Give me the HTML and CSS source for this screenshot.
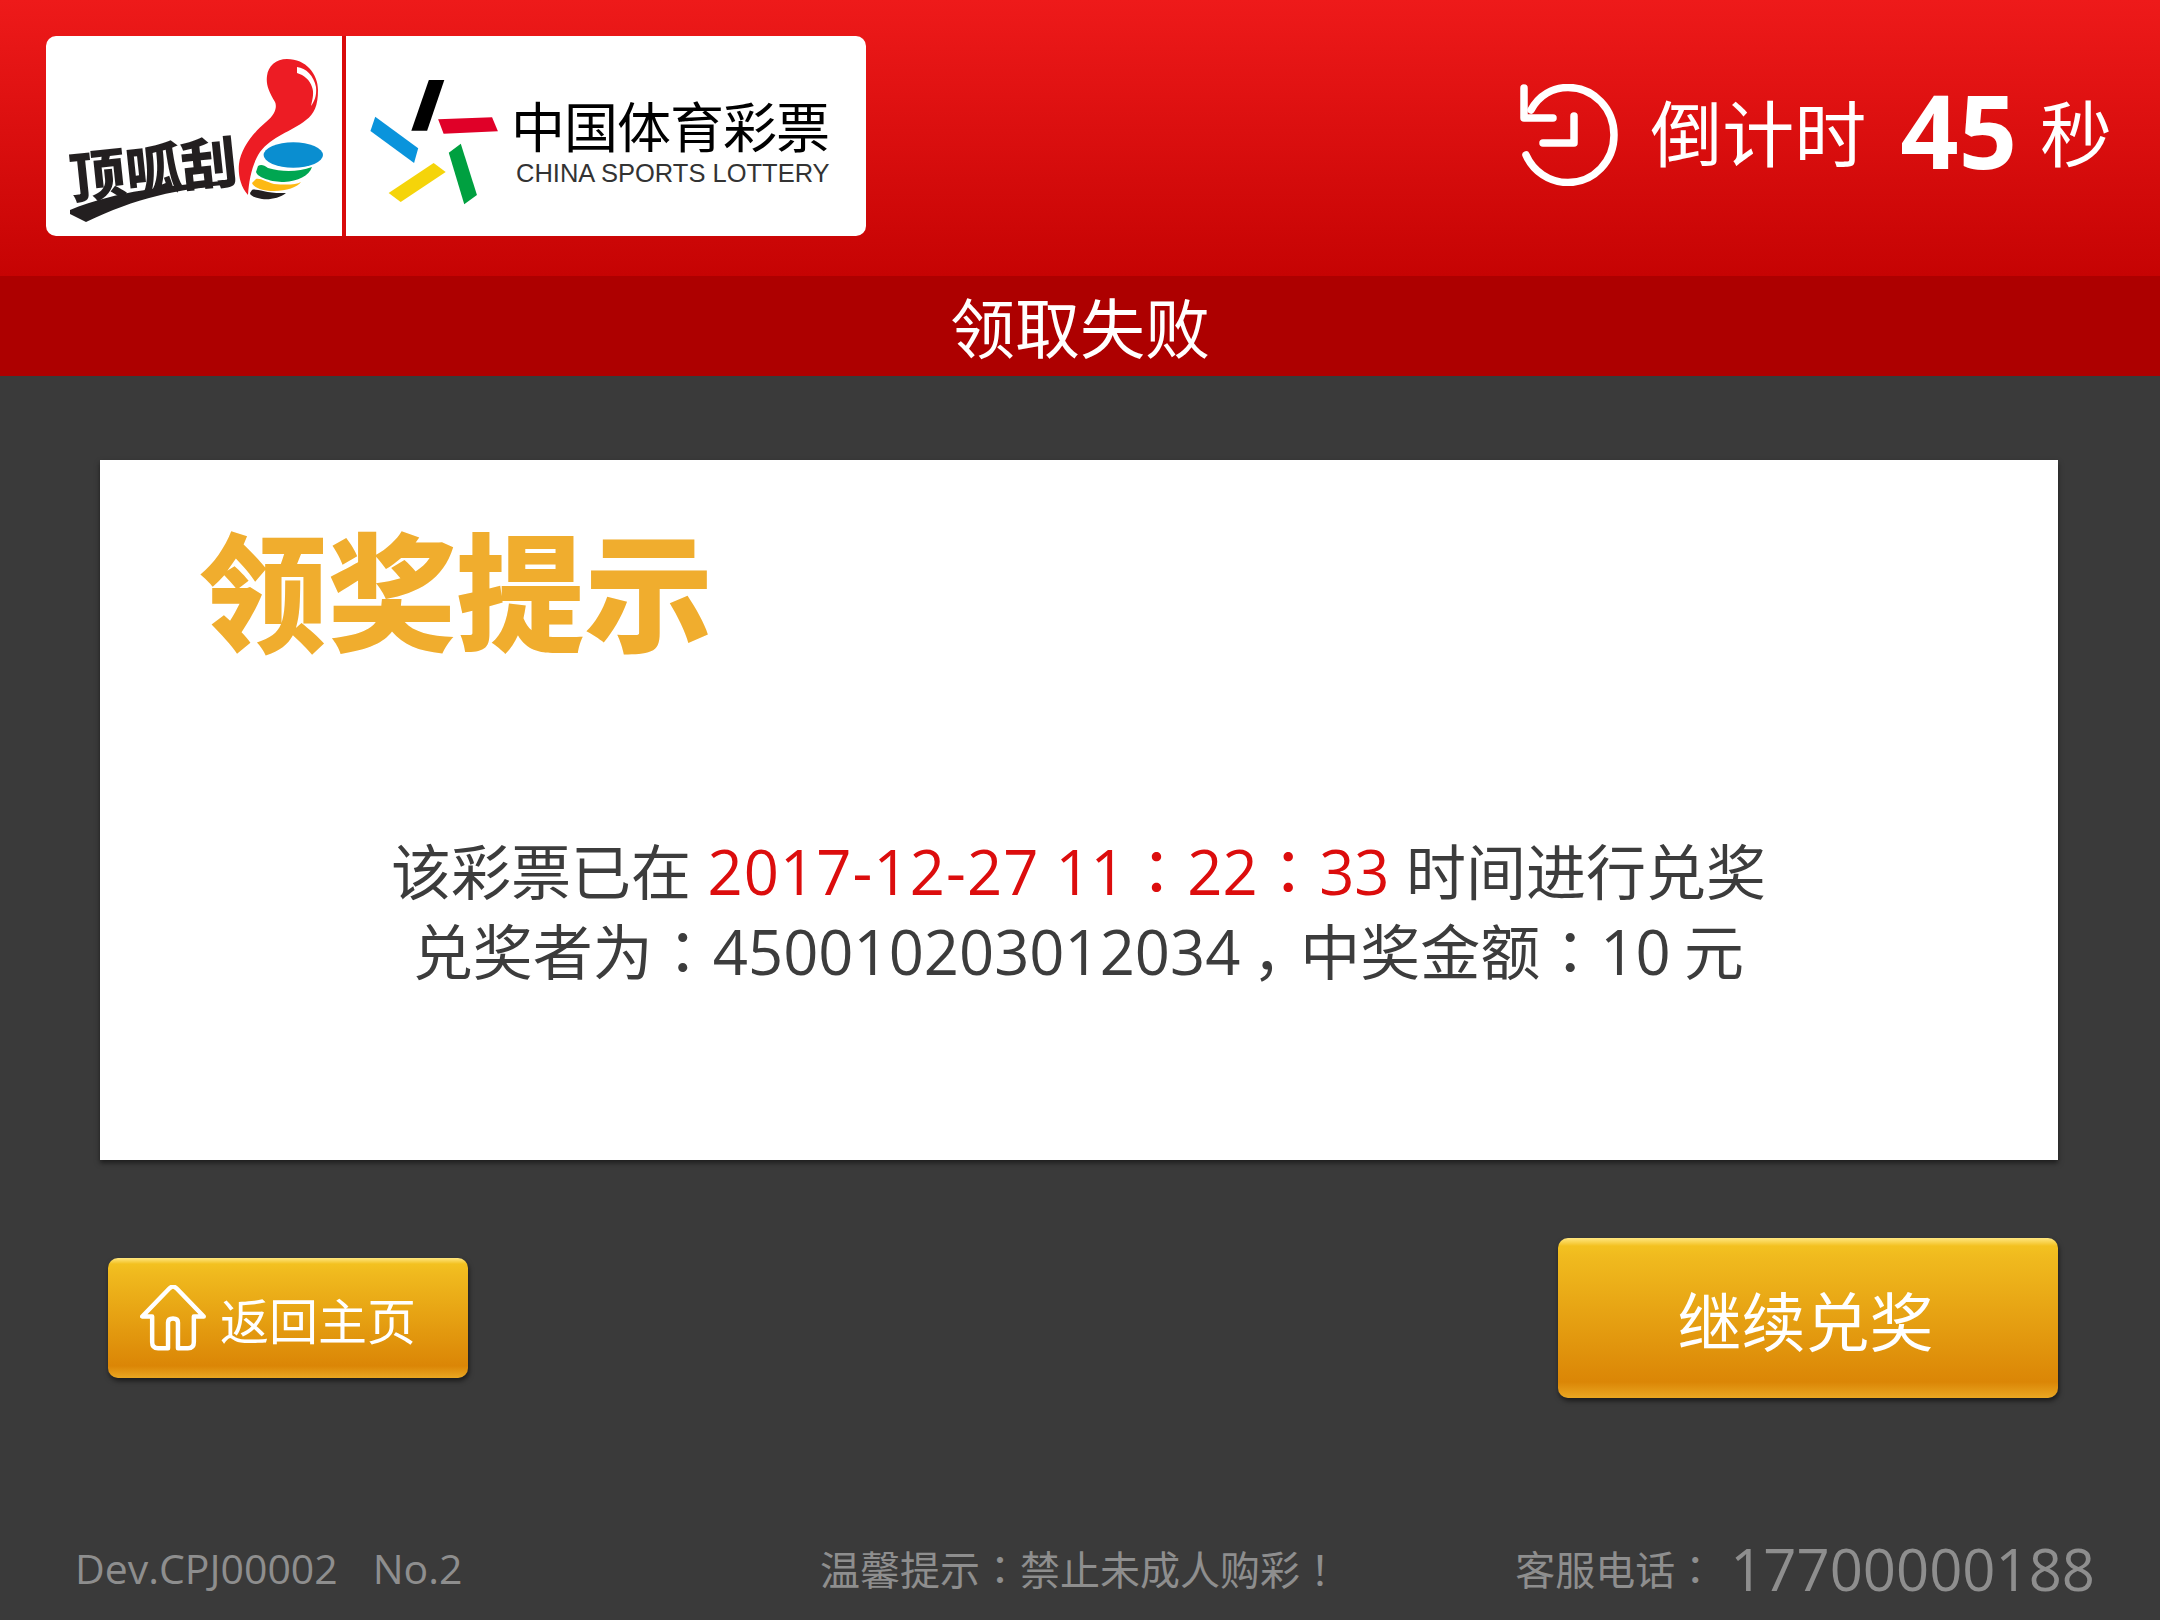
FILE: index.html
```html
<!DOCTYPE html>
<html lang="zh-CN">
<head>
  <meta charset="UTF-8" />
  <title>领取失败</title>
  <link rel="stylesheet" href="styles.css">
</head>
<body>
  <header class="top-bar">
    <div class="logo-box">
      <div class="logo-left">
        <svg class="guagua" width="296" height="200" viewBox="0 0 296 200">
          <text class="guagua-text" transform="translate(26 163) rotate(-6)">顶呱刮</text>
          <path d="M24 174C70 155 120 150 188 144L188 148C130 153 90 162 40 186L24 178Z" fill="#231f20"/>
          <path d="M241 23C260 23 272 38 272 54C272 70 268 78 260 84C245 96 226 100 214 116C206 128 203 144 202 159C194 150 192 138 193 128C195 112 208 96 220 86C230 78 231 70 229 66C222 54 220 48 221 40C222 30 230 23 241 23Z" fill="#ed1c24"/>
          <path d="M251 31C260 32 268 40 270 51C271 60 268 66 265 70C267 62 268 56 266 51C264 44 258 39 251 37Z" fill="#fff"/>
          <ellipse cx="247.300" cy="119" rx="29.700" ry="12.700" fill="#0a8ed0"/>
          <path d="M212 130C215 128 218 129 222 132C236 136 252 136 266 131C263 140 252 145 238 146C226 146 212 142 210 136Z" fill="#00a651"/>
          <path d="M210 143C215 142 220 146 228 148C240 149 250 149 255 146C252 151 240 155 228 155C218 155 208 152 206 147Z" fill="#fdb913"/>
          <path d="M206 154C210 152 220 158 240 157C234 162 224 164 216 163C210 162 204 160 204 157Z" fill="#231f20"/>
        </svg>
      </div>
      <div class="logo-right">
        <svg class="star" width="134" height="130" viewBox="80 165 390 390" preserveAspectRatio="none">
          <polygon points="260,174 305,174 255,326 209,326" fill="#000"/>
          <polygon points="287,292 444,286 461,328 303,335" fill="#e00028"/>
          <polygon points="104,284 229,379 217,423 90,327" fill="#0a94dc"/>
          <polygon points="318,392 353,365 400,519 363,547" fill="#00a040"/>
          <polygon points="274,423 309,450 178,540 143,513" fill="#f5d40a"/>
        </svg>
        <div class="logo-words">
          <div class="logo-cn">中国体育彩票</div>
          <div class="logo-en">CHINA SPORTS LOTTERY</div>
        </div>
      </div>
    </div>
    <div class="countdown">
      <svg class="clock" width="98" height="102" viewBox="0 0 98 102" fill="none" stroke="#fff" stroke-width="7.500" stroke-linecap="round" stroke-linejoin="round">
        <path d="M4 4V34H33"/>
        <path d="M11 26C19 11 33 3.500 48 3.500C74 3.500 94 25 94 51C94 77 74 98.500 48 98.500C29 98.500 13 87 6 71"/>
        <path d="M54 32V59H23"/>
      </svg>
      <span class="cd-label">倒计时</span>
      <b class="cd-num">45</b>
      <span class="cd-label">秒</span>
    </div>
  </header>
  <div class="status-bar">领取失败</div>

  <main class="content">
    <section class="card">
      <h1 class="card-title">领奖提示</h1>
      <div class="card-msg">
        <p>该彩票已在 <span class="num red"><span class="date">2017-12-27</span> 11<span class="punc" lang="zh-Hant">：</span>22<span class="punc" lang="zh-Hant">：</span>33</span> 时间进行兑奖</p>
        <p>兑奖者为<span class="punc" lang="zh-Hant">：</span><span class="num">450010203012034</span><span class="comma">，</span>中奖金额<span class="punc" lang="zh-Hant">：</span><span class="num">10</span> 元</p>
      </div>
    </section>

    <div class="actions">
      <button class="btn btn-home">
        <svg width="66" height="66" viewBox="0.750 1.500 66.500 66" fill="none" stroke="#fff" stroke-width="4.500" stroke-linejoin="round" stroke-linecap="round">
          <path d="M13 33V59C13 63 15 65 19 65H29V39C29 36 31 35 34 35C37 35 39 36 39 39V65H49C53 65 55 63 55 59V33H65L38 5C35 2 33 2 30 5L3 33Z"/>
        </svg>
        返回主页
      </button>
      <button class="btn btn-next">继续兑奖</button>
    </div>
  </main>

  <footer class="foot">
    <div class="foot-dev"><span>Dev.CPJ00002</span><span>No.2</span></div>
    <div class="foot-tip">温馨提示<span class="punc" lang="zh-Hant">：</span>禁止未成人购彩<span class="punc" lang="zh-Hant">！</span></div>
    <div class="foot-tel">客服电话<span class="punc" lang="zh-Hant">：</span><span class="tel-num">17700000188</span></div>
  </footer>
</body>
</html>
```

FILE: styles.css
```css
* {
  box-sizing: border-box;
}
html, body {
  margin: 0;
  padding: 0;
}
body {
  width: 2160px;
  height: 1620px;
  background-color: #3a3a3a;
  font-family: "Noto Sans CJK SC", "Open Sans", sans-serif;
  display: flex;
  flex-direction: column;
  overflow: hidden;
}
.top-bar {
  height: 276px;
  padding: 36px 48px 0 46px;
  display: flex;
  justify-content: space-between;
  align-items: flex-start;
  background: linear-gradient(#ee1a1a, #c60303);
}
.logo-box {
  width: 820px;
  height: 200px;
  display: flex;
  background-color: white;
  border-radius: 10px;
}
.logo-left {
  width: 296px;
  height: 200px;
}
.guagua {
  display: block;
}
.guagua-text {
  font-size: 56px;
  font-weight: 900;
  fill: #231f20;
}
.logo-right {
  flex: 1;
  border-left: 4px solid #d90a0a;
  padding: 41px 0 0 21px;
  display: flex;
  align-items: flex-start;
  gap: 10px;
}
.star {
  flex-shrink: 0;
}
.logo-words {
  padding-top: 17px;
}
.logo-cn {
  font-size: 54px;
  line-height: 62px;
  letter-spacing: -1px;
  color: #000;
  white-space: nowrap;
}
.logo-en {
  font-family: "Liberation Sans", sans-serif;
  font-size: 25.500px;
  line-height: 34px;
  margin-left: 5px;
  color: #333;
  white-space: nowrap;
}
.countdown {
  margin-top: 48px;
  display: flex;
  align-items: center;
  color: white;
  height: 102px;
}
.clock {
  margin-right: 32px;
}
.cd-label {
  font-size: 72px;
  line-height: 1;
  margin-bottom: 10px;
}
.cd-num {
  font-family: "Open Sans", sans-serif;
  font-size: 102px;
  margin: 0 23px 10px 34px;
  line-height: 1;
}
.status-bar {
  height: 100px;
  line-height: 98px;
  text-align: center;
  background: #ad0000;
  color: white;
  font-size: 65px;
}
.content {
  flex: 1;
  padding: 84px 102px 0 100px;
}
.card {
  height: 700px;
  background-color: white;
  box-shadow: 0 3px 5px rgba(0, 0, 0, .5);
  padding: 51px 100px 0 99px;
}
.card-title {
  margin: 0;
  font-size: 128.500px;
  line-height: 150px;
  font-weight: 900;
  color: #f0ad2e;
}
.card-msg {
  margin-top: 169px;
  text-align: center;
  font-size: 60px;
  line-height: 78px;
  color: #3c3c3c;
}
.card-msg p {
  margin: 0;
  white-space: nowrap;
}
.num {
  font-family: "Open Sans", sans-serif;
  font-size: 61.500px;
}
.date {
  letter-spacing: 1.100px;
}
.red {
  color: #dc0d0d;
  margin: 0 3px;
}
/* 繁体字形的标点是居中的 */
.punc {
  font-family: "Noto Sans CJK TC", sans-serif;
}
.comma {
  margin-left: 12px;
  letter-spacing: -12px;
}
.actions {
  margin-top: 78px;
  padding-left: 8px;
  display: flex;
  justify-content: space-between;
  align-items: center;
}
.btn {
  border: none;
  color: white;
  font-family: inherit;
  border-radius: 10px;
  background: linear-gradient(#ffe680 0, #f3c120 5%, #f0ba1e 12%, #db8606 90%, #eaa722 100%);
  box-shadow: 1px 3px 5px rgba(0, 0, 0, .55);
  display: flex;
  align-items: center;
  justify-content: center;
}
.btn-home {
  width: 360px;
  height: 120px;
  font-size: 49px;
  gap: 14px;
  padding: 0 0 0 32px;
  justify-content: flex-start;
}
.btn-next {
  width: 500px;
  height: 160px;
  font-size: 64px;
  padding-right: 11px;
}
.foot {
  height: 132px;
  padding: 28px 65px 0 75px;
  display: grid;
  grid-template-columns: 745px 695px 1fr;
  align-items: center;
  color: #8e8e8e;
  font-size: 40px;
}
.foot-dev {
  font-family: "Open Sans", sans-serif;
  font-size: 41px;
  display: flex;
  gap: 35px;
}
.foot-tel {
  justify-self: end;
  display: flex;
  align-items: center;
  white-space: nowrap;
}
.tel-num {
  font-family: "Open Sans", sans-serif;
  font-size: 58px;
  margin-left: 15px;
}
```
